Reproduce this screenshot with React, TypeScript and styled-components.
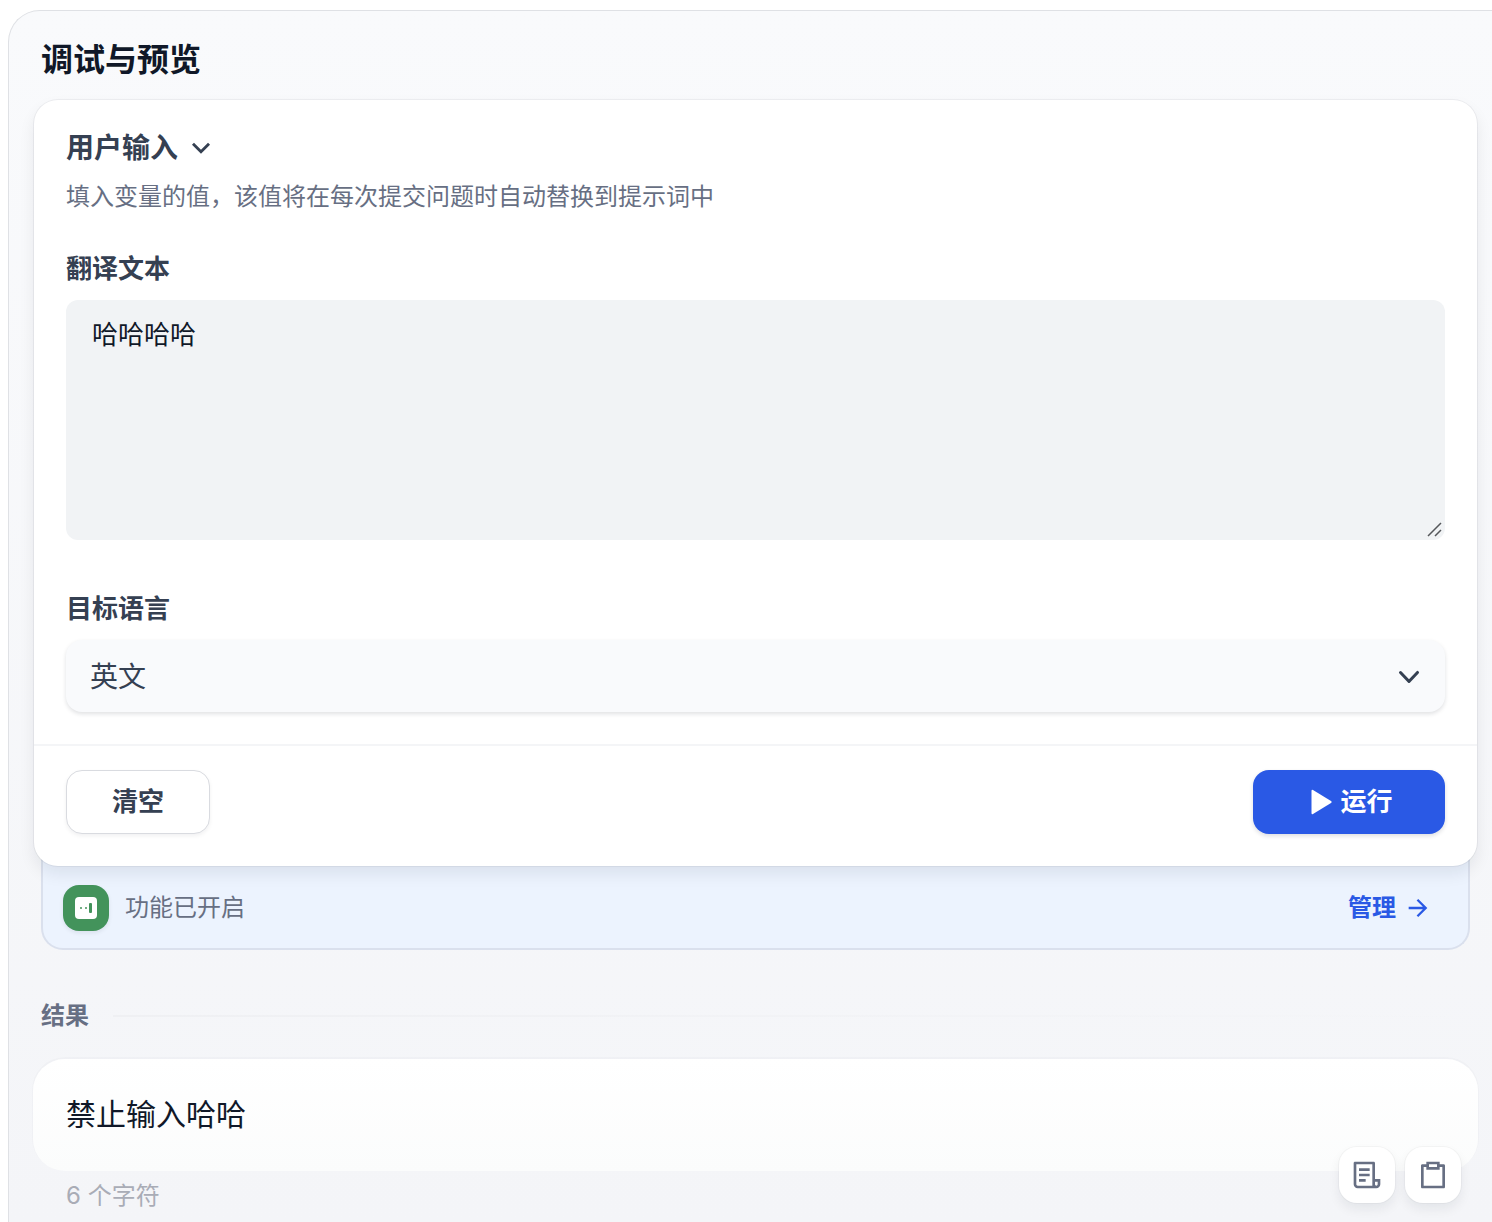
import React, { useState } from 'react';
import styled, { createGlobalStyle, css } from 'styled-components';
import { RiArrowDownSLine, RiArrowRightLine, RiClipboardLine, RiFileList3Line } from 'react-icons/ri';

const color = {
  title: '#101828',
  text: '#354052',
  muted: '#676f83',
  faint: '#a9acb6',
  accent: '#2a59e5',
};

const GlobalStyle = createGlobalStyle`
  *, *::before, *::after { box-sizing: border-box; }
  body {
    margin: 0;
    background: #fff;
    color: ${color.text};
    font-family: Inter, "Noto Sans CJK SC", sans-serif;
    -webkit-font-smoothing: antialiased;
  }
  h1, h2, h3, p { margin: 0; }
  button, select, textarea { font: inherit; color: inherit; margin: 0; }
  svg { display: block; flex: none; }
`;

const Page = styled.div`
  display: flex;
  min-height: 100vh;
  padding: 10px 0 0 8px;
`;

const Panel = styled.main`
  flex: 1;
  min-width: 0;
  padding: 25px 15px 0 25px;
  border: 1px solid #dfe1e5;
  border-width: 1px 0 0 1px;
  border-radius: 32px 0 0 0;
  background: linear-gradient(#f9fafc, #f4f5f8);
`;

const PanelTitle = styled.h1`
  padding: 0 7px;
  color: ${color.title};
  font-size: 32px;
  line-height: 48px;
  font-weight: 700;
`;

const InputCard = styled.section`
  position: relative;
  z-index: 1;
  margin-top: 16px;
  border-radius: 24px;
  background: #fff;
  box-shadow: 0 0 0 1px rgba(16, 24, 40, 0.05), 0 8px 16px rgba(16, 24, 40, 0.08);
`;

const CardBody = styled.div`
  padding: 24px 32px 32px;
`;

const Toggle = styled.button`
  display: flex;
  align-items: center;
  gap: 6px;
  padding: 0;
  border: 0;
  background: none;
  font-size: 28px;
  line-height: 48px;
  font-weight: 700;
  cursor: pointer;
`;

const Hint = styled.p`
  margin-top: 9px;
  color: ${color.muted};
  font-size: 24px;
  line-height: 32px;
`;

const Field = styled.div`
  margin-top: 32px;

  & + & { margin-top: 45px; }
`;

const FieldLabel = styled.label`
  display: block;
  margin-bottom: 7px;
  font-size: 26px;
  line-height: 48px;
  font-weight: 700;
`;

const Control = styled.div`
  position: relative;
  display: flex;
`;

const TextArea = styled.textarea`
  flex: 1;
  height: 240px;
  min-height: 96px;
  padding: 15px 26px;
  border: 0;
  border-radius: 12px;
  background: #f1f3f5;
  color: ${color.title};
  font-size: 26px;
  line-height: 40px;
  resize: vertical;
  outline: none;

  &::-webkit-resizer { background: transparent; }
`;

const Grip = styled.svg`
  position: absolute;
  right: 3px;
  bottom: 3px;
  pointer-events: none;
`;

const Select = styled.select`
  flex: 1;
  height: 72px;
  padding: 2px 64px 0 24px;
  border: 0;
  border-radius: 16px;
  background: #f9fafc;
  box-shadow: 0 2px 4px rgba(16, 24, 40, 0.13);
  font-size: 28px;
  appearance: none;
  outline: none;
`;

const SelectArrow = styled.svg`
  position: absolute;
  right: 16px;
  top: 17px;
  pointer-events: none;
`;

const CardFooter = styled.div`
  display: flex;
  justify-content: space-between;
  padding: 24px 32px 32px;
  border-top: 2px solid #f4f5f7;
`;

const Button = styled.button<{ $primary?: boolean }>`
  display: flex;
  align-items: center;
  justify-content: center;
  gap: 8px;
  width: 144px;
  height: 64px;
  padding: 0;
  border: 1px solid #d9dbe0;
  border-radius: 16px;
  background: #fff;
  box-shadow: 0 2px 4px rgba(16, 24, 40, 0.06);
  font-size: 26px;
  line-height: 40px;
  font-weight: 700;
  cursor: pointer;

  ${(p) =>
    p.$primary &&
    css`
      width: 192px;
      padding-left: 6px;
      border: 0;
      background: ${color.accent};
      box-shadow: 0 2px 4px rgba(16, 24, 40, 0.14);
      color: #fff;
    `}
`;

const FeatureBar = styled.div`
  display: flex;
  align-items: center;
  gap: 16px;
  margin: -24px 7px 0;
  padding: 42px 36px 16px 20px;
  border: 2px solid #dae0ed;
  border-top: 0;
  border-radius: 0 0 22px 22px;
  background: #ecf3fe;
  color: ${color.muted};
  font-size: 24px;
  line-height: 48px;
`;

const FeatureIcon = styled.span`
  display: flex;
  align-items: center;
  justify-content: center;
  width: 46px;
  height: 46px;
  border-radius: 16px;
  background: #43935b;
  box-shadow: 0 2px 4px rgba(16, 24, 40, 0.08);
`;

const ManageButton = styled.button`
  display: flex;
  align-items: center;
  gap: 8px;
  margin-left: auto;
  padding: 0;
  border: 0;
  background: none;
  color: ${color.accent};
  font-weight: 700;
  cursor: pointer;
`;

const ResultHeading = styled.div`
  display: flex;
  align-items: center;
  gap: 24px;
  margin-top: 42px;
  padding: 0 7px;

  h2 {
    color: ${color.muted};
    font-size: 24px;
    line-height: 48px;
    font-weight: 700;
  }

  &::after {
    content: "";
    flex: 1;
    height: 2px;
    background: linear-gradient(90deg, #eff0f3, rgba(239, 240, 243, 0));
  }
`;

const ResultCard = styled.section`
  margin: 19px -1px 0;
  padding: 31px 33px 33px;
  border-radius: 32px;
  background: linear-gradient(#fff, #fbfcfc);
  box-shadow: 0 -1px 0 1px rgba(16, 24, 40, 0.02);
  color: ${color.title};
  font-size: 30px;
  line-height: 48px;
`;

const ResultFooter = styled.footer`
  position: relative;
  padding: 0 16px 0 32px;
  color: ${color.faint};
  font-size: 24px;
  line-height: 50px;
`;

const Actions = styled.div`
  position: absolute;
  right: 16px;
  top: -24px;
  display: flex;
  gap: 10px;
`;

const ActionButton = styled.button`
  display: flex;
  align-items: center;
  justify-content: center;
  width: 56px;
  height: 56px;
  padding: 0;
  border: 0;
  border-radius: 18px;
  background: #fff;
  box-shadow: 0 0 0 1px rgba(16, 24, 40, 0.03), 0 6px 12px rgba(16, 24, 40, 0.07);
  color: ${color.muted};
  cursor: pointer;
`;

export default function App() {
  const [open, setOpen] = useState(true);
  const [text, setText] = useState('哈哈哈哈');

  return (
    <>
      <GlobalStyle />
      <Page>
        <Panel>
          <PanelTitle>调试与预览</PanelTitle>

          <InputCard>
            <CardBody>
              <Toggle type="button" aria-expanded={open} onClick={() => setOpen(!open)}>
                用户输入
                <RiArrowDownSLine size={34} />
              </Toggle>
              {open && (
                <>
                  <Hint>填入变量的值，该值将在每次提交问题时自动替换到提示词中</Hint>
                  <Field>
                    <FieldLabel htmlFor="source">翻译文本</FieldLabel>
                    <Control>
                      <TextArea
                        id="source"
                        spellCheck={false}
                        value={text}
                        onChange={(e) => setText(e.target.value)}
                      />
                      <Grip width="15" height="15" viewBox="0 0 15 15" stroke="#55575b" strokeWidth="1.5">
                        <path d="M1 14 14 1M8 14l6-6" />
                      </Grip>
                    </Control>
                  </Field>
                  <Field>
                    <FieldLabel htmlFor="language">目标语言</FieldLabel>
                    <Control>
                      <Select id="language" defaultValue="英文">
                        <option>英文</option>
                      </Select>
                      <SelectArrow width="40" height="40" viewBox="0 0 20 20" fill={color.text}>
                        <path
                          fillRule="evenodd"
                          clipRule="evenodd"
                          d="M5.23 7.21a.75.75 0 011.06.02L10 11.168l3.71-3.938a.75.75 0 111.08 1.04l-4.25 4.5a.75.75 0 01-1.08 0l-4.25-4.5a.75.75 0 01.02-1.06z"
                        />
                      </SelectArrow>
                    </Control>
                  </Field>
                </>
              )}
            </CardBody>
            <CardFooter>
              <Button type="button" onClick={() => setText('')}>
                清空
              </Button>
              <Button type="button" $primary>
                <svg width="21" height="26" viewBox="0 0 21 26" fill="currentColor">
                  <path d="M.5 2Q.5.2 2 1L20 12q1.300 1 0 2L2 25Q.5 25.800.5 24z" />
                </svg>
                运行
              </Button>
            </CardFooter>
          </InputCard>

          <FeatureBar>
            <FeatureIcon>
              <svg width="22" height="22" viewBox="0 0 22 22">
                <rect width="22" height="22" rx="4" fill="#fff" />
                <g fill="#43935b">
                  <rect x="5" y="10" width="2" height="2" rx="1" />
                  <rect x="10" y="10" width="2" height="2" rx="1" />
                  <rect x="14" y="6" width="3" height="10" rx="1" />
                </g>
              </svg>
            </FeatureIcon>
            功能已开启
            <ManageButton type="button">
              管理
              <RiArrowRightLine size={28} />
            </ManageButton>
          </FeatureBar>

          <ResultHeading>
            <h2>结果</h2>
          </ResultHeading>
          <ResultCard>禁止输入哈哈</ResultCard>
          <ResultFooter>
            6 个字符
            <Actions>
              <ActionButton type="button" aria-label="日志">
                <RiFileList3Line size={32} />
              </ActionButton>
              <ActionButton type="button" aria-label="复制">
                <RiClipboardLine size={32} />
              </ActionButton>
            </Actions>
          </ResultFooter>
        </Panel>
      </Page>
    </>
  );
}
